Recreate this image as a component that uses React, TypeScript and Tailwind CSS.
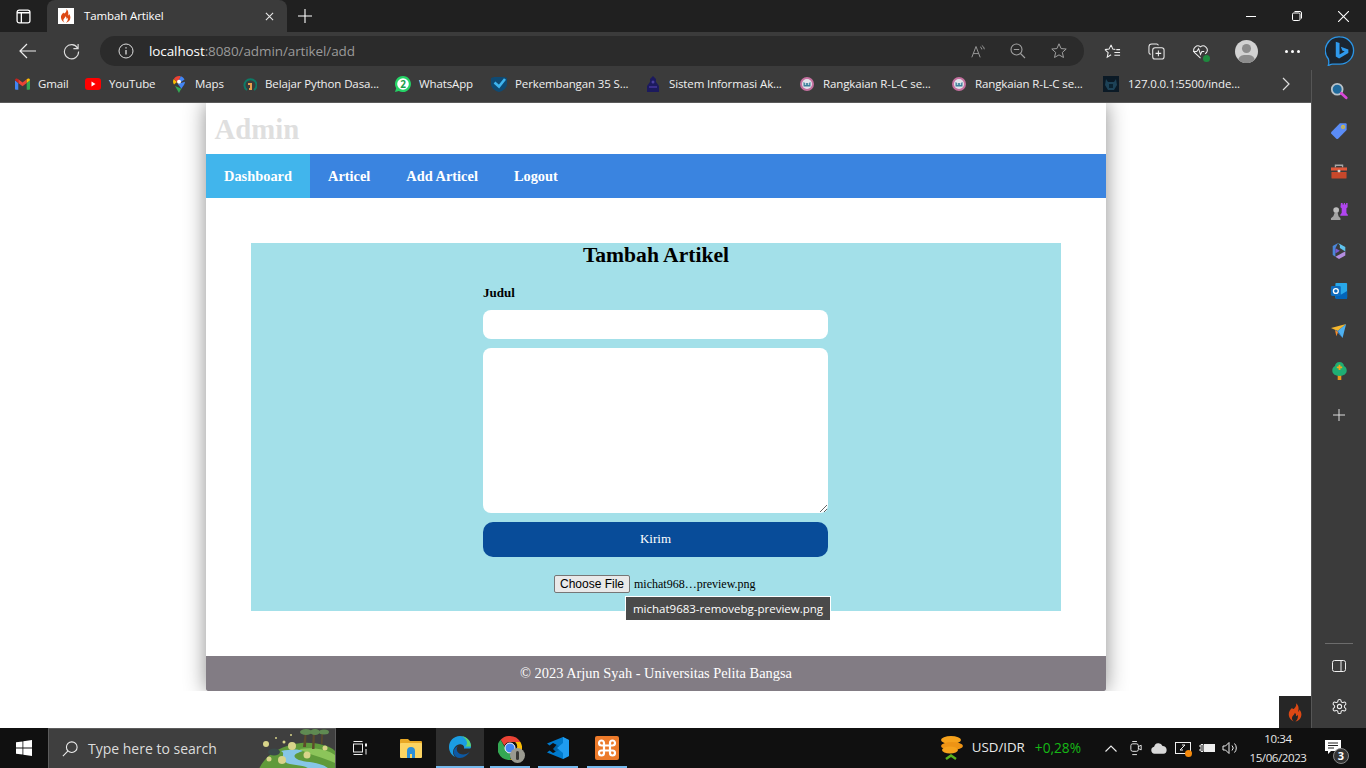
import React from "react";

const Flame = ({ className }: { className?: string }) => (
  <svg viewBox="0 0 16 20" className={className}>
    <path
      fill="#dd4814"
      d="M8.600 0c.7 2.600-.6 4.200-2 5.700C5.300 7 4.600 6.300 4.700 4.900 2.400 6.600.6 9.100.8 12.200c.2 3.700 2.800 6.500 5.600 7.400-1.500-1.100-2.500-2.600-2.100-4.300.4-1.700 2.400-2.800 3.100-5 1.300 1.300 1.400 2.600 1 3.600.8 0 1.500-.6 1.800-1.500.9 2 .4 5.100-2.300 7.200 3.500-.7 6.400-3.600 6.400-7.500 0-2.300-1-4-2.200-5.400 0 1.400-.5 2.200-1.400 2.600C11.700 6.300 11.800 2.600 8.600 0z"
    />
  </svg>
);

const Star = ({ className }: { className?: string }) => (
  <svg viewBox="0 0 20 20" fill="none" stroke="currentColor" strokeWidth="1.100" className={className}>
    <path d="M10 2l2.300 5.300 5.700.5-4.300 3.800 1.300 5.600L10 14.300 5 17.200l1.300-5.600L2 7.800l5.700-.5z" />
  </svg>
);

function RlcIcon() {
  return (
    <svg viewBox="0 0 14 14" className="w-[14px] h-[14px]">
      <circle cx="7" cy="7" r="7" fill="#c4709f" />
      <circle cx="7" cy="7" r="5" fill="#e3e3ea" />
      <path fill="#3b7f9a" d="M3.500 5l1.500 1h4l1.500-1v4.500h-7z" />
      <circle cx="5.500" cy="7" r=".8" fill="#fff" />
      <circle cx="8.500" cy="7" r=".8" fill="#fff" />
    </svg>
  );
}

const bookmarks: { label: string; w: string; slot: string; icon: React.ReactNode }[] = [
  {
    label: "Gmail",
    w: "w-[70px]",
    slot: "w-[23px]",
    icon: (
      <svg viewBox="0 0 16 12" className="w-[15px] h-[12px]">
        <path fill="#4285f4" d="M0 2v9a1 1 0 0 0 1 1h2.500V5z" />
        <path fill="#34a853" d="M16 2v9a1 1 0 0 1-1 1h-2.500V5z" />
        <path fill="#ea4335" d="M3.500 5V1L8 4.500 12.500 1v4L8 8.300z" />
        <path fill="#c5221f" d="M0 2c0-1.600 1.900-2.500 3.500-1v4z" />
        <path fill="#fbbc04" d="M16 2c0-1.600-1.900-2.500-3.500-1v4z" />
      </svg>
    ),
  },
  {
    label: "YouTube",
    w: "w-[88px]",
    slot: "w-[24px]",
    icon: (
      <svg viewBox="0 0 16 12" className="w-[16px] h-[12px]">
        <rect width="16" height="12" rx="3" fill="#f00" />
        <path fill="#fff" d="M6.500 3.500v5l4-2.500z" />
      </svg>
    ),
  },
  {
    label: "Maps",
    w: "w-[70px]",
    slot: "w-[22px]",
    icon: (
      <svg viewBox="0 0 12 17" className="w-[12px] h-[17px]">
        <path fill="#34a853" d="M2 10l4 7c.5-1.500 1.500-3 2.500-4.300z" />
        <path fill="#fbbc04" d="M1 8.500C.3 7.500 0 6.500 0 5.700c0-1 .3-2 .8-2.800L4 6z" />
        <path fill="#4285f4" d="M12 5.700c0 2.400-2 4.300-3.500 7L4.800 8z" />
        <path fill="#ea4335" d="M.8 2.900L4 6l2-2 1.800-3.700C7.200.1 6.600 0 6 0 3.800 0 1.900 1.200.8 2.900z" />
        <path fill="#4285f4" d="M7.800.3L6 4l2 2 3.500-2.500C10.800 2 9.500.8 7.800.3z" />
        <circle cx="6" cy="5.700" r="2" fill="#fff" />
      </svg>
    ),
  },
  {
    label: "Belajar Python Dasa...",
    w: "w-[152px]",
    slot: "w-[22px]",
    icon: (
      <svg viewBox="0 0 14 16" fill="none" className="w-[14px] h-[16px]">
        <path d="M4 14a6 6 0 1 1 7 0" stroke="#0d7a66" strokeWidth="2" />
        <path d="M5 8h3v5H6" stroke="#e8a04c" strokeWidth="2" />
      </svg>
    ),
  },
  {
    label: "WhatsApp",
    w: "w-[96px]",
    slot: "w-[24px]",
    icon: (
      <svg viewBox="0 0 16 16" className="w-[16px] h-[16px]">
        <path fill="#25d366" d="M8 0a8 8 0 0 0-6.800 12.200L0 16l3.900-1.100A8 8 0 1 0 8 0z" />
        <circle cx="8" cy="8" r="5.800" fill="#fff" />
        <text x="8" y="11.500" textAnchor="middle" fontSize="10" fontWeight="700" fill="#1a9e4b" fontFamily="Open Sans, sans-serif">
          2
        </text>
      </svg>
    ),
  },
  {
    label: "Perkembangan 35 S...",
    w: "w-[154px]",
    slot: "w-[24px]",
    icon: (
      <svg viewBox="0 0 16 16" className="w-[16px] h-[16px]">
        <path fill="#0f4a73" d="M0 2l3-1h10l3 1v6c0 4-4 7-8 8-4-1-8-4-8-8z" />
        <path fill="none" stroke="#3fb4ee" strokeWidth="2.600" d="M3.500 6.500L8 10.500 14 3" />
      </svg>
    ),
  },
  {
    label: "Sistem Informasi Ak...",
    w: "w-[155px]",
    slot: "w-[24px]",
    icon: (
      <svg viewBox="0 0 14 16" className="w-[14px] h-[16px] ml-[1px]">
        <path fill="#1c1a5e" d="M7 0l3 3v3l3 4v6H1v-6l3-4V3z" />
        <path fill="#3b2f8c" d="M3 10h8v2H3z" />
        <circle cx="7" cy="6" r="1.500" fill="#4a3f9e" />
      </svg>
    ),
  },
  { label: "Rangkaian R-L-C se...", w: "w-[152px]", slot: "w-[23px]", icon: <RlcIcon /> },
  { label: "Rangkaian R-L-C se...", w: "w-[151px]", slot: "w-[23px]", icon: <RlcIcon /> },
  {
    label: "127.0.0.1:5500/inde...",
    w: "w-[182px]",
    slot: "w-[25px]",
    icon: (
      <svg viewBox="0 0 16 16" className="w-[16px] h-[16px]">
        <rect width="16" height="16" fill="#0b1a26" />
        <path fill="#1d4257" d="M3 3l2 3h6l2-3 1 6-3 5H5L2 9z" />
        <path fill="#0a2230" d="M6 8h4v4H6z" />
      </svg>
    ),
  },
];

const sideIcons: React.ReactNode[] = [
  <svg key="s" viewBox="0 0 20 20" className="w-[18px] h-[18px]">
    <circle cx="8" cy="8" r="6" fill="#1f6a9c" stroke="#b9c2c8" strokeWidth="2" />
    <path d="M12.500 12.500L18 17.500" stroke="#d946d8" strokeWidth="3" strokeLinecap="round" />
  </svg>,
  <svg key="t" viewBox="0 0 20 20" className="w-[18px] h-[18px]">
    <path fill="#5b8cf5" d="M11 1.500h6.500a1 1 0 0 1 1 1V9L9 18.500a1.500 1.500 0 0 1-2 0L1.500 13a1.500 1.500 0 0 1 0-2z" />
    <circle cx="14.500" cy="5.500" r="1.500" fill="none" stroke="#f3c317" strokeWidth="1.200" />
  </svg>,
  <svg key="b" viewBox="0 0 20 18" className="w-[18px] h-[16px]">
    <path fill="none" stroke="#a8a8a8" strokeWidth="1.500" d="M6 5V2.500h8V5" />
    <path fill="#e2583a" d="M1 5h18v3.500H1z" />
    <path fill="#c9482b" d="M1.500 10H18.500v6.500a1 1 0 0 1-1 1h-15a1 1 0 0 1-1-1z" />
    <rect x="8.500" y="7.500" width="3" height="3" rx="1" fill="#d8d8d8" />
  </svg>,
  <svg key="c" viewBox="0 0 20 20" className="w-[19px] h-[19px]">
    <circle cx="6.500" cy="8.500" r="3" fill="#bdbdbd" />
    <path fill="#a3a3a3" d="M5 11h3l1 4 2 2v2H1v-2l2.500-2z" />
    <path fill="#b145f0" d="M11.500 1h1.800v1.500h1.200V1h1.300v1.500h1.200V1h1.500v4.500l-1.200 1v5l1.500 2v1h-8v-1l1.500-2v-5l-1.300-1z" />
  </svg>,
  <svg key="m" viewBox="0 0 20 20" className="w-[18px] h-[18px]">
    <path fill="#4a86d9" d="M9 1L3 4.500v10l3 2V7z" />
    <path fill="#5fc3ee" d="M9 1l8 4.500v5l-3-2-3-1.700V4z" />
    <path fill="#b38de0" d="M17 10.500V15l-7 4-4-2.500 8-4.500z" />
    <path fill="#7b5cd6" d="M6 7l5 2.800-5 3z" />
  </svg>,
  <svg key="o" viewBox="0 0 20 20" className="w-[18px] h-[18px]">
    <rect x="6" y="1" width="13" height="17" rx="1" fill="#28a8ea" />
    <path fill="#0364b8" d="M6 10l6.500 4L19 10v8a1 1 0 0 1-1 1H7a1 1 0 0 1-1-1z" />
    <rect x="1" y="4.500" width="11" height="11" rx="1.500" fill="#0f6cbd" />
    <circle cx="6.500" cy="10" r="2.700" fill="none" stroke="#fff" strokeWidth="1.500" />
  </svg>,
  <svg key="p" viewBox="0 0 20 18" className="w-[18px] h-[16px]">
    <path fill="#f3b62e" d="M1 5.500L18 1 8.500 9z" />
    <path fill="#4db0f0" d="M8.500 9L18 1l-4 16z" />
    <path fill="#2e7fd8" d="M5.500 7.500L8.500 9 14 17z" />
    <path fill="#f08a2c" d="M5.500 8l1.500 7 2-5z" />
  </svg>,
  <svg key="g" viewBox="0 0 16 20" className="w-[15px] h-[18px]">
    <rect x="6" y="14" width="4" height="6" fill="#e89a1c" />
    <path fill="#1fae74" d="M8 0c3 0 5 2 5 4.500 2 1 3 2.700 3 5 0 3.500-3 6-8 6s-8-2.500-8-6c0-2.300 1-4 3-5C3 2 5 0 8 0z" />
    <path fill="#f2a81d" d="M7 3h2v2h2v2H9v2H7V7H5V5h2z" />
  </svg>,
];

export default function App() {
  return (
    <div className="h-screen w-[1366px] overflow-hidden flex flex-col bg-white font-['Open_Sans',sans-serif]">
      {/* tab strip */}
      <div className="h-8 flex bg-[#202020] text-white shrink-0">
        <div className="w-[47px] flex items-center justify-center">
          <svg viewBox="0 0 14 14" fill="none" stroke="#fff" strokeWidth="1.200" className="w-[15px] h-[15px]">
            <rect x="1" y="1" width="12" height="12" rx="2" />
            <path d="M5 3v10M1 3.500h12" />
          </svg>
        </div>
        <div className="w-[240px] h-8 bg-[#3b3b3b] rounded-t-lg flex items-center pl-[11px] pr-[13px]">
          <div className="w-4 h-4 bg-white flex items-center justify-center">
            <Flame className="w-[12px] h-[14px]" />
          </div>
          <span className="ml-[10px] text-[11.500px] tracking-[-0.12px] flex-1 leading-none">Tambah Artikel</span>
          <svg viewBox="0 0 10 10" stroke="#e8e8e8" strokeWidth="1.200" className="w-[9px] h-[9px]">
            <path d="M1 1l8 8M9 1l-8 8" />
          </svg>
        </div>
        <div className="w-[36px] flex items-center justify-center">
          <svg viewBox="0 0 14 14" stroke="#fff" strokeWidth="1.100" className="w-[14px] h-[14px]">
            <path d="M7 0v14M0 7h14" />
          </svg>
        </div>
        <div className="flex-1" />
        <div className="flex items-center">
          <div className="w-[46px] flex justify-center">
            <div className="w-[10px] h-px bg-white" />
          </div>
          <div className="w-[46px] flex justify-center">
            <svg viewBox="0 0 10 10" fill="none" stroke="#fff" className="w-[10px] h-[10px]">
              <rect x=".5" y="2" width="7.500" height="7.500" rx="1.200" />
              <path d="M2.500 .5h5.500a1.500 1.500 0 0 1 1.500 1.500v5.500" />
            </svg>
          </div>
          <div className="w-[46px] flex justify-center">
            <svg viewBox="0 0 10 10" stroke="#fff" className="w-[11px] h-[11px]">
              <path d="M0 0l10 10M10 0L0 10" />
            </svg>
          </div>
        </div>
      </div>

      {/* toolbar */}
      <div className="h-[38px] bg-[#3b3b3b] flex items-center shrink-0 text-[#e6e6e6]">
        <div className="w-[100px] flex items-center shrink-0">
          <svg viewBox="0 0 18 16" fill="none" stroke="#eee" strokeWidth="1.200" className="w-[18px] h-[16px] ml-[19px]">
            <path d="M17 8H1M8 1L1 8l7 7" />
          </svg>
          <svg viewBox="0 0 18 18" fill="none" stroke="#ddd" strokeWidth="1.200" className="w-[17px] h-[17px] ml-[26px]">
            <path d="M15.500 5.500A7.500 7.500 0 1 0 16.500 9M16 1v5h-5" />
          </svg>
        </div>
        <div className="w-[984px] h-[30px] bg-[#2b2b2b] rounded-full flex items-center pl-[18px] pr-[16px] shrink-0">
          <svg viewBox="0 0 16 16" fill="none" stroke="#ddd" className="w-4 h-4">
            <circle cx="8" cy="8" r="7" />
            <path d="M8 7v4.500M8 4.300v1.200" strokeWidth="1.300" />
          </svg>
          <span className="ml-[15px] mt-[1px] text-[13.500px] tracking-[-0.1px] leading-none text-white">
            localhost<span className="text-[#9a9a9a]">:8080/admin/artikel/add</span>
          </span>
          <div className="flex-1" />
          <div className="flex items-center gap-[24px] text-[#a0a0a0]">
            <svg viewBox="0 0 18 16" fill="none" stroke="currentColor" strokeWidth="1.100" className="w-[15px] h-[15px]">
              <path d="M1 15L6 2l5 13M2.800 10.500h6.400M11 2.500a3 3 0 0 1 2 3M13 .8a5.500 5.500 0 0 1 3 4.500" />
            </svg>
            <svg viewBox="0 0 16 16" fill="none" stroke="currentColor" strokeWidth="1.100" className="w-[16px] h-[16px]">
              <circle cx="6.500" cy="6.500" r="5.500" />
              <path d="M3.800 6.500h5.400M10.500 10.500L15 15" />
            </svg>
            <Star className="w-[18px] h-[18px]" />
          </div>
        </div>
        <div className="flex-1 flex items-center text-white">
          <svg viewBox="0 0 18 18" fill="none" stroke="#eee" strokeWidth="1.100" className="w-[17px] h-[17px] ml-[20px]">
            <path d="M7.500 2l1.800 4.500 2.700.3M1 7l4.300-.5L7.500 2M1 7l3.400 3.200-1 4.800 4.100-2.500M11 10h6M11 13h6M13 7h4" />
          </svg>
          <svg viewBox="0 0 18 18" fill="none" stroke="#eee" strokeWidth="1.100" className="w-[17px] h-[17px] ml-[27px]">
            <path d="M3 12a2 2 0 0 1-2-2V4a3 3 0 0 1 3-3h5a2 2 0 0 1 2 1.500" />
            <rect x="5" y="5" width="12" height="12" rx="2.500" />
            <path d="M11 8v6M8 11h6" />
          </svg>
          <div className="relative ml-[27px]">
            <svg viewBox="0 0 18 16" fill="none" stroke="#eee" strokeWidth="1.100" className="w-[17px] h-[15px]">
              <path d="M9 15L2.500 9A4.500 4.500 0 0 1 9 3a4.500 4.500 0 0 1 6.500 6L14 10.500M1 8h4l2-3 2 6 1.500-3H13" />
            </svg>
            <div className="absolute right-[-1px] bottom-[-3px] w-[7px] h-[7px] rounded-full bg-[#1e8a3e]" />
          </div>
          <div className="relative w-[23px] h-[23px] rounded-full bg-[#d2d2d2] overflow-hidden ml-[26px]">
            <div className="absolute left-[7px] top-[4px] w-[9px] h-[9px] rounded-full bg-[#8c8c8c]" />
            <div className="absolute left-[3px] top-[15px] w-[17px] h-[12px] rounded-full bg-[#8c8c8c]" />
          </div>
          <div className="flex gap-[3px] ml-[27px]">
            <div className="w-[3px] h-[3px] rounded-full bg-white" />
            <div className="w-[3px] h-[3px] rounded-full bg-white" />
            <div className="w-[3px] h-[3px] rounded-full bg-white" />
          </div>
          <svg viewBox="0 0 32 32" className="w-[30px] h-[30px] ml-[25px]">
            <path fill="#1b2530" stroke="#2b95e6" strokeWidth="1.400" d="M16 1a14.500 14.500 0 0 1 0 29H8c-1.500 0-3 .8-4.500 1.500C4.300 29 4.300 27.200 3.600 24.500A14.500 14.500 0 0 1 16 1z" />
            <path fill="#2f9aee" d="M11.500 6l4 1.400v12.200l5.500-3-2.600-1.200-1.500-3.900 8 2.800v3.900l-9.900 5.800-3.500-2.200z" />
          </svg>
        </div>
      </div>

      {/* bookmarks + page + sidebar */}
      <div className="flex-1 flex min-h-0">
        <div className="flex-1 flex flex-col min-w-0 relative">
          <div className="h-[33px] bg-[#3b3b3b] border-b border-[#5a5a5a] flex items-center pl-[15px] pb-[4px] shrink-0 text-[11.500px] tracking-[-0.12px] text-[#f0f0f0] relative z-10">
            {bookmarks.map((b, i) => (
              <div key={i} className={`${b.w} flex items-center shrink-0`}>
                <span className={`${b.slot} flex shrink-0`}>{b.icon}</span>
                <span className="whitespace-nowrap leading-none">{b.label}</span>
              </div>
            ))}
            <svg viewBox="0 0 8 14" fill="none" stroke="#ddd" strokeWidth="1.200" className="w-[8px] h-[14px] -ml-[3px]">
              <path d="M1 1l6 6-6 6" />
            </svg>
          </div>

          {/* the page in the browser */}
          <div className="flex-1 bg-white font-['Liberation_Serif',serif] overflow-hidden">
            <div className="w-[900px] ml-[206px] bg-white shadow-[0_0_20px_rgba(0,0,0,0.45)] [clip-path:inset(0_-30px_0_-30px)]">
              <div className="h-[51px] pl-[8.500px] pt-[2px] flex items-center">
                <h1 className="text-[28.800px] font-bold text-[#dfdfdf] leading-none">Admin</h1>
              </div>
              <nav className="h-[44px] bg-[#3a84e0] flex text-white font-bold text-[14.400px] pt-[1px]">
                <a className="px-[18px] -mt-[1px] pt-[1px] flex items-center bg-[#41b5ec]">Dashboard</a>
                <a className="px-[18px] flex items-center">Articel</a>
                <a className="px-[18px] flex items-center">Add Articel</a>
                <a className="px-[18px] flex items-center">Logout</a>
              </nav>
              <div className="px-[45px] py-[45px]">
                <div className="h-[368px] bg-[#a3e0e9] flex flex-col items-center relative">
                  <h2 className="text-[21.600px] font-bold text-black leading-[24px]">Tambah Artikel</h2>
                  <div className="w-[345px] self-start ml-[232px] mt-[18px] flex flex-col">
                    <label className="text-[13px] font-bold leading-[15px] text-black">Judul</label>
                    <input type="text" className="mt-[10px] h-[29px] bg-white rounded-[8px] outline-none" />
                    <textarea className="mt-[9px] h-[165px] bg-white rounded-[8px] outline-none block" />
                    <button className="mt-[9px] h-[35px] pb-[2px] bg-[#084c99] rounded-[10px] text-white text-[13px]">Kirim</button>
                  </div>
                  <div className="mt-[18px] w-[345px] self-start ml-[232px] flex items-center pl-[71px] text-[12px] text-black">
                    <button className="h-[18px] w-[76px] bg-[#e9e9e9] border border-[#767676] rounded-[2px] font-['Liberation_Sans',sans-serif] text-[12px] leading-none text-black whitespace-nowrap">
                      Choose File
                    </button>
                    <span className="ml-[4px] leading-none whitespace-nowrap">michat968…preview.png</span>
                  </div>
                  <div className="absolute left-[374px] top-[353px] h-[25px] w-[206px] bg-[#4a4a4a] border border-white text-white text-[11.500px] font-['Open_Sans',sans-serif] flex items-center justify-center whitespace-nowrap">
                    michat9683-removebg-preview.png
                  </div>
                </div>
              </div>
              <footer className="h-[35px] bg-[#827c84] rounded-b-[2px] flex items-center justify-center text-[14.400px] text-white">
                © 2023 Arjun Syah - Universitas Pelita Bangsa
              </footer>
            </div>
          </div>

          <div className="absolute right-0 bottom-0 w-[32px] h-[32px] bg-[#262626] flex items-center justify-center">
            <Flame className="w-[15px] h-[19px]" />
          </div>
        </div>

        {/* edge sidebar */}
        <div className="w-[55px] bg-[#3b3b3b] border-l border-[#565656] flex flex-col items-center shrink-0">
          <div className="h-px w-full" />
          {sideIcons.map((ic, i) => (
            <div key={i} className="h-[40px] w-full flex items-center justify-center">
              {ic}
            </div>
          ))}
          <div className="h-[47px] w-full flex items-center justify-center">
            <svg viewBox="0 0 12 12" stroke="#ddd" className="w-[12px] h-[12px]">
              <path d="M6 0v12M0 6h12" />
            </svg>
          </div>
          <div className="flex-1" />
          <div className="w-[28px] h-px bg-[#6c6c6c]" />
          <div className="h-[44px] flex items-center">
            <svg viewBox="0 0 14 12" fill="none" stroke="#eee" className="w-[14px] h-[12px]">
              <rect x=".5" y=".5" width="13" height="11" rx="2" />
              <path d="M9 .5v11" />
            </svg>
          </div>
          <div className="h-[40px] pb-[3px] flex items-center">
            <svg viewBox="0 0 24 24" fill="none" stroke="#eee" strokeWidth="1.500" className="w-[17px] h-[17px]">
              <circle cx="12" cy="12" r="3" />
              <path d="M12.220 2h-.44a2 2 0 0 0-2 2v.18a2 2 0 0 1-1 1.730l-.43.25a2 2 0 0 1-2 0l-.15-.08a2 2 0 0 0-2.730.73l-.22.38a2 2 0 0 0 .73 2.730l.15.1a2 2 0 0 1 1 1.720v.51a2 2 0 0 1-1 1.740l-.15.09a2 2 0 0 0-.73 2.730l.22.38a2 2 0 0 0 2.730.73l.15-.08a2 2 0 0 1 2 0l.43.25a2 2 0 0 1 1 1.730V20a2 2 0 0 0 2 2h.44a2 2 0 0 0 2-2v-.18a2 2 0 0 1 1-1.730l.43-.25a2 2 0 0 1 2 0l.15.08a2 2 0 0 0 2.730-.73l.22-.39a2 2 0 0 0-.73-2.730l-.15-.08a2 2 0 0 1-1-1.740v-.5a2 2 0 0 1 1-1.740l.15-.09a2 2 0 0 0 .73-2.730l-.22-.38a2 2 0 0 0-2.730-.73l-.15.08a2 2 0 0 1-2 0l-.43-.25a2 2 0 0 1-1-1.730V4a2 2 0 0 0-2-2z" />
            </svg>
          </div>
        </div>
      </div>

      {/* windows taskbar */}
      <div className="h-[40px] bg-[#101010] flex items-center shrink-0 text-[#e8e8e8]">
        <div className="w-[48px] flex justify-center shrink-0">
          <svg viewBox="0 0 16 16" fill="#fff" className="w-[16px] h-[16px]">
            <path d="M0 2.300l6.500-.9v6.200H0zM7.300 1.300L16 0v7.600H7.300zM0 8.400h6.500v6.200L0 13.700zM7.300 8.400H16V16l-8.700-1.200z" />
          </svg>
        </div>
        <div className="w-[288px] h-[40px] bg-[#3f3f3f] border-t border-x border-[#5c5c5c] flex items-center pl-[13px] shrink-0 relative overflow-hidden">
          <svg viewBox="0 0 18 18" fill="none" stroke="#eee" strokeWidth="1.200" className="w-[16px] h-[16px]">
            <circle cx="11" cy="7" r="6" />
            <path d="M6.500 11.500L1 17" />
          </svg>
          <span className="ml-[10px] text-[14px] text-[#dcdcdc]">Type here to search</span>
          <svg viewBox="0 0 76 40" className="absolute right-0 top-0 w-[76px] h-[40px]">
            <path fill="#5f9a3a" d="M0 40C6 26 22 16 42 14c14-1 28 2 34 8v18z" />
            <path fill="#8cc45a" d="M40 20c14-2 28 0 36 6v8c-12-6-26-8-36-14z" />
            <path fill="#86c6e6" d="M22 22c10-2 18-2 22 0-6 2-12 4-6 8s24 2 32 10H50c-6-6-24-2-26-10-1-4 2-6-2-8z" />
            <ellipse cx="15" cy="23" rx="6" ry="3.500" fill="#3a4a4a" />
            <g fill="#5d4a2c">
              <path d="M44 18l2-16h1.500l-.5 16zM53 20l1-19h2l-.5 19zM62 15l.5-14h1.500l-.5 14z" />
            </g>
            <g fill="#5f8a52">
              <ellipse cx="47" cy="3" rx="6" ry="3" />
              <ellipse cx="56" cy="3" rx="5" ry="3" />
              <ellipse cx="65" cy="3" rx="5" ry="2.500" />
            </g>
            <g fill="#d8d48a">
              <circle cx="7" cy="15" r="3" />
              <circle cx="33" cy="17" r="4" />
              <circle cx="10" cy="30" r="2.500" />
              <circle cx="23" cy="31" r="4" />
              <circle cx="48" cy="26" r="3.500" />
              <circle cx="66" cy="19" r="2.500" />
              <circle cx="17" cy="9" r="1" />
              <circle cx="25" cy="13" r="1.500" />
              <circle cx="32" cy="6" r="1" />
            </g>
          </svg>
        </div>
        <div className="w-[52px] flex justify-center pr-[4px] shrink-0">
          <svg viewBox="0 0 16 16" fill="none" stroke="#eee" className="w-[16px] h-[16px]">
            <rect x="1.500" y="4" width="9" height="8" />
            <path d="M1.500 1.500h9M1.500 14.500h9" />
            <rect x="13" y="3.500" width="2" height="3" fill="#eee" stroke="none" />
            <path d="M14 9v5.500" />
          </svg>
        </div>
        <div className="w-[48px] flex justify-center pr-[2px] shrink-0">
          <svg viewBox="0 0 22 20" className="w-[22px] h-[20px]">
            <path fill="#e8a825" d="M0 2a1 1 0 0 1 1-1h7l2 2h11a1 1 0 0 1 1 1v3H0z" />
            <rect y="5" width="22" height="15" rx="1" fill="#fcd462" />
            <path fill="#2d8fd8" d="M7 20v-7a4 4 0 0 1 8 0v7h-3v-4h-2v4z" />
          </svg>
        </div>
        <div className="w-[48px] h-[40px] bg-[#2e2e2e] border-b-2 border-[#76b9ed] flex justify-center items-center shrink-0">
          <svg viewBox="0 0 24 24" className="w-[24px] h-[24px]">
            <path fill="#0c59a4" d="M21.800 16.500c-2 3.500-5.500 6.500-10 6.500-3 0-5.500-2-6-4.500-.8-3 1-6 4-7.500-1 1.500-1.500 3.500-.5 5.500s3.500 3 6 3c2.500 0 4.800-1.300 6.500-3z" />
            <path fill="#1b9de2" d="M12 1C5.500 1 1 6 1 12c0 4.500 2.500 8 6 10-2-2-2.500-5-1.500-7.500C7 11 10 8.500 13.500 9.500c2 .5 3 2 2.500 4h5.500c1 0 1.500-.5 1.500-2C23 5.500 18 1 12 1z" />
            <path fill="#5fd36b" d="M23 11.500C23 5.500 18 1 12 1c3.500 0 6.500 3 7 6.500.2 1.500-.5 3-2 4z" />
          </svg>
        </div>
        <div className="w-[48px] ml-[2px] h-[40px] flex flex-col items-center justify-end shrink-0">
          <div className="relative w-[24px] h-[24px] mb-[6px]">
            <svg viewBox="0 0 24 24" className="w-[24px] h-[24px]">
              <path fill="#ea4335" d="M12 0a12 12 0 0 1 10.400 6H12a6 6 0 0 0-5.600 3.800L2.600 3.800A12 12 0 0 1 12 0z" />
              <path fill="#fbbc04" d="M22.400 6A12 12 0 0 1 12 24l5.200-9a6 6 0 0 0 0-9z" />
              <path fill="#34a853" d="M12 24A12 12 0 0 1 2.600 3.800l4.800 8.400a6 6 0 0 0 6.400 5.500z" />
              <circle cx="12" cy="12" r="5" fill="#4285f4" stroke="#fff" />
            </svg>
            <div className="absolute right-[-3px] bottom-[-3px] w-[15px] h-[15px] rounded-full bg-[#9a9a90] flex justify-center items-center">
              <div className="w-[3px] h-[9px] rounded-full bg-[#3a3a36]" />
            </div>
          </div>
          <div className="w-[40px] h-[2px] bg-[#76b9ed]" />
        </div>
        <div className="w-[48px] h-[40px] flex flex-col items-center justify-end shrink-0">
          <svg viewBox="0 0 24 24" className="w-[24px] h-[24px] mb-[6px]">
            <path fill="#0065a9" d="M17 1l6 3v16l-6 3-10-10z" />
            <path fill="#007acc" d="M17 1v22L1 16.500l2.500-2L7 17l10-5-10-5-3.500 2.500L1 7.500z" />
            <path fill="#1f9cf0" d="M17 1l6 3v16l-6 3V17l-6-5 6-5z" />
          </svg>
          <div className="w-[40px] h-[2px] bg-[#76b9ed]" />
        </div>
        <div className="w-[48px] ml-[1px] h-[40px] flex flex-col items-center justify-end shrink-0">
          <svg viewBox="0 0 24 24" className="w-[24px] h-[24px] mb-[6px]">
            <rect width="24" height="24" rx="2" fill="#ec7a2a" />
            <path fill="none" stroke="#fff" strokeWidth="2.200" d="M9 9V7a2.500 2.500 0 1 0-2.500 2.500h11A2.500 2.500 0 1 0 15 7v10a2.500 2.500 0 1 0 2.500-2.500h-11A2.500 2.500 0 1 0 9 17z" />
          </svg>
          <div className="w-[40px] h-[2px] bg-[#76b9ed]" />
        </div>
        <div className="flex-1" />
        <svg viewBox="0 0 24 26" className="w-[24px] h-[26px]">
          <ellipse cx="12" cy="5" rx="10" ry="4" fill="#f6a21c" />
          <ellipse cx="13" cy="11" rx="11" ry="4" fill="#ee9415" />
          <ellipse cx="11" cy="15" rx="8" ry="3.500" fill="#f6a21c" />
          <path d="M7 24l5-3.500 5 3.500" fill="none" stroke="#58b21e" strokeWidth="2.500" />
        </svg>
        <span className="ml-[9px] text-[13.300px] leading-none">USD/IDR</span>
        <span className="ml-[10px] text-[13.700px] leading-none text-[#16b816]">+0,28%</span>
        <svg viewBox="0 0 12 7" fill="none" stroke="#eee" strokeWidth="1.100" className="w-[12px] h-[7px] ml-[24px]">
          <path d="M.5 6.500L6 1l5.500 5.500" />
        </svg>
        <svg viewBox="0 0 12 16" fill="none" stroke="#eee" className="w-[12px] h-[15px] ml-[13px]">
          <rect x=".5" y="3" width="8" height="8" rx="2" />
          <path d="M8.500 6l3-1.500v5l-3-1.500M2 .5h5M2 14.500h5" />
        </svg>
        <svg viewBox="0 0 18 12" fill="#d8d8d8" className="w-[16px] h-[11px] ml-[9px]">
          <path d="M4 12a4 4 0 0 1-.5-7.900 5 5 0 0 1 9.500-1A4.500 4.500 0 0 1 14 12z" />
        </svg>
        <div className="relative ml-[8px]">
          <svg viewBox="0 0 16 15" fill="none" stroke="#eee" className="w-[16px] h-[15px]">
            <rect x=".5" y="1.500" width="15" height="11" />
            <path d="M5 9l5-5M10 4H7M5 9h3" />
          </svg>
          <div className="absolute right-[-1px] bottom-[-1px] w-[7px] h-[7px] rounded-full bg-[#f58a0c]" />
        </div>
        <svg viewBox="0 0 16 10" fill="none" stroke="#eee" className="w-[16px] h-[10px] ml-[8px]">
          <path d="M0 3h2M0 7h2M2 1.500h2v7H2z" />
          <rect x="5.500" y="1.500" width="10" height="7" fill="#eee" />
        </svg>
        <svg viewBox="0 0 16 14" fill="none" stroke="#eee" className="w-[16px] h-[14px] ml-[7px]">
          <path d="M1 5v4h2.500L7 12.500v-11L3.500 5zM10 4.500a3.500 3.500 0 0 1 0 5M12.500 2.500a6.500 6.500 0 0 1 0 9" />
        </svg>
        <div className="w-[70px] flex flex-col items-center ml-[5px] text-[11.500px] tracking-[-0.4px] leading-[19px] text-[#e8e8e8]">
          <span>10:34</span>
          <span>15/06/2023</span>
        </div>
        <div className="relative w-[53px] h-[40px] flex items-center pl-[12px]">
          <svg viewBox="0 0 16 14" className="w-[16px] h-[14px] -mt-[2px]">
            <path fill="#fff" d="M0 0h16v11H6l-3 3v-3H0z" />
            <path stroke="#222" d="M3 3h10M3 5.500h10M3 8h6" />
          </svg>
          <div className="absolute left-[20px] top-[20px] w-[16px] h-[16px] rounded-full bg-[#333] border border-[#888] text-[11px] leading-[14px] font-bold text-center text-white">
            3
          </div>
        </div>
      </div>
    </div>
  );
}
